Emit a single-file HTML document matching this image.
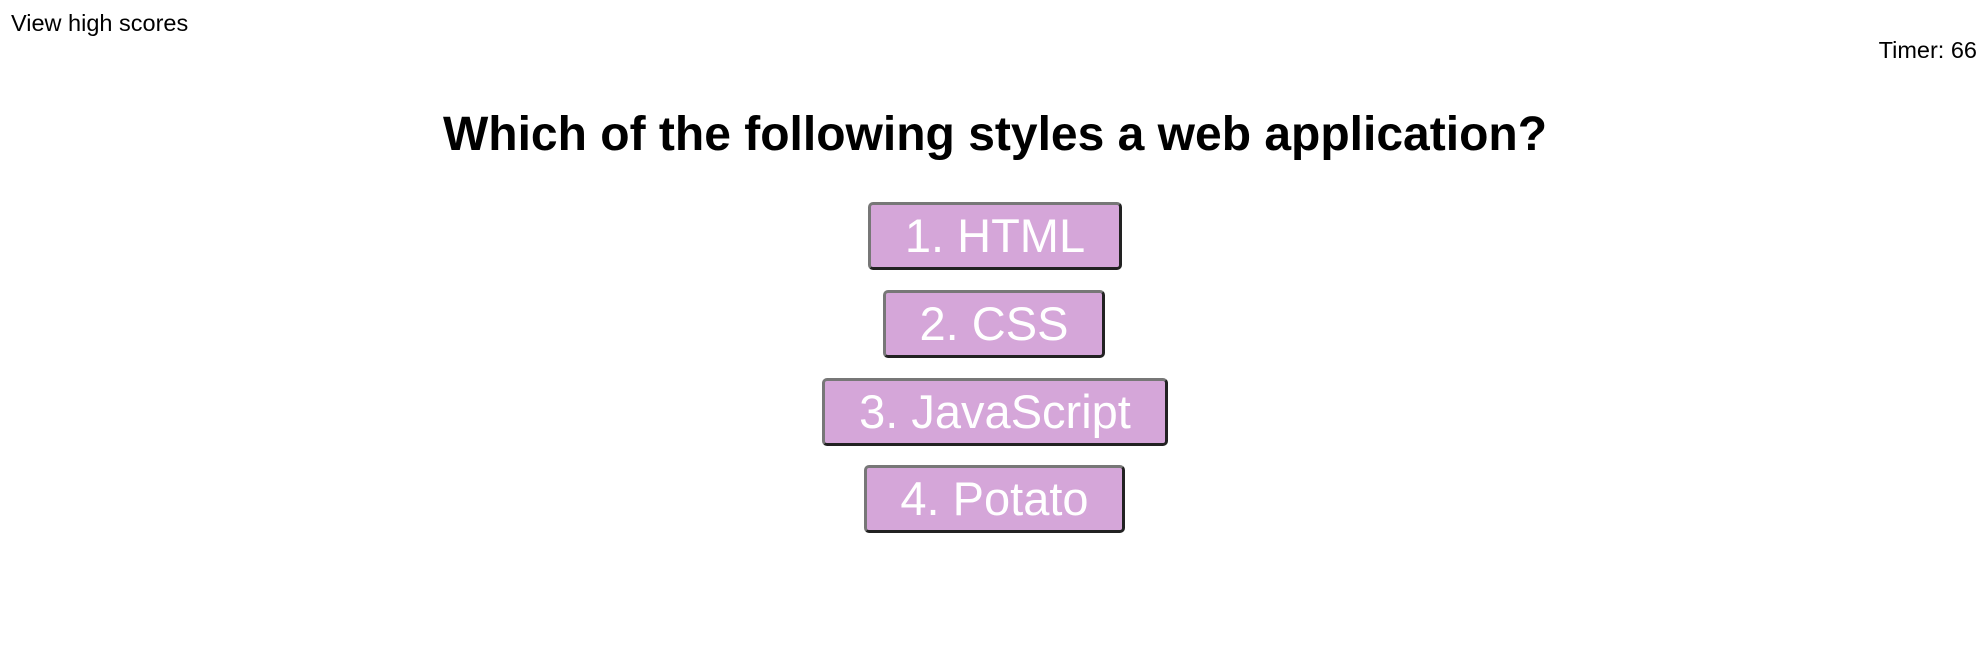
<!DOCTYPE html>
<html><head><meta charset="utf-8"><style>
html,body{margin:0;padding:0;background:#fff;width:1988px;height:662px;overflow:hidden;font-family:"Liberation Sans",Arial,sans-serif;color:#000;}
.hs{position:absolute;left:11px;top:10px;font-size:23.5px;line-height:27px;white-space:nowrap;}
.tm{position:absolute;right:11px;top:37px;font-size:23.5px;line-height:27px;white-space:nowrap;}
.q{position:absolute;left:0;width:1990px;top:107px;text-align:center;font-weight:bold;font-size:48px;line-height:55px;white-space:nowrap;}
.b{position:absolute;box-sizing:border-box;background:#d5a6d9;color:#fff;font-size:47px;line-height:62px;text-align:center;white-space:nowrap;border:3px solid;border-color:#777 #222 #222 #777;border-radius:5px;}
</style></head><body>
<div class="hs">View high scores</div>
<div class="tm">Timer: 66</div>
<div class="q">Which of the following styles a web application?</div>
<div class="b" style="left:868px;top:202px;width:254px;height:68px;">1. HTML</div>
<div class="b" style="left:883px;top:290px;width:222px;height:68px;">2. CSS</div>
<div class="b" style="left:822px;top:378px;width:346px;height:68px;">3. JavaScript</div>
<div class="b" style="left:864px;top:465px;width:261px;height:68px;">4. Potato</div>
</body></html>
